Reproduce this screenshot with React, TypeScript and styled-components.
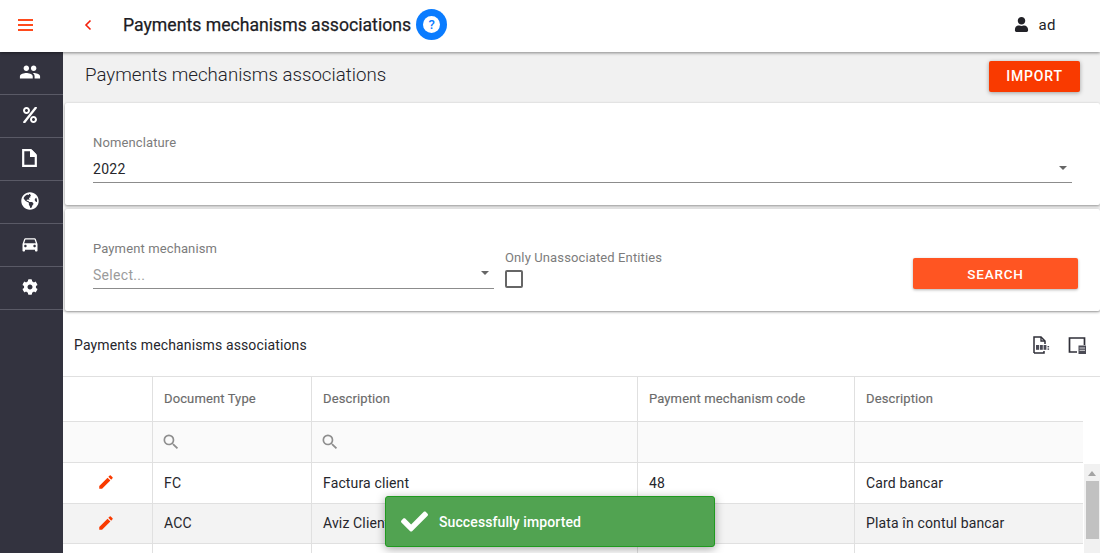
import React from "react";
import styled, { createGlobalStyle } from "styled-components";
import { FaCheck, FaCog, FaGlobeAmericas, FaPercent, FaUser } from "react-icons/fa";
import { MdDirectionsCar, MdEdit, MdPeople, MdSearch } from "react-icons/md";

const GlobalStyle = createGlobalStyle`
  html, body {
    margin: 0;
    padding: 0;
    height: 100%;
    overflow: hidden;
    background: #ffffff;
    font-family: Roboto, "Liberation Sans", sans-serif;
  }
  * { box-sizing: border-box; }
`;

const Page = styled.div`
  position: relative;
  width: 1100px;
  height: 553px;
  overflow: hidden;
  display: flex;
  flex-direction: column;
`;

const TopBar = styled.header`
  position: relative;
  z-index: 2;
  flex: 0 0 52px;
  height: 52px;
  display: flex;
  align-items: center;
  padding-bottom: 3px;
  background: #ffffff;
  box-shadow: 0 1px 3px rgba(0, 0, 0, 0.45);
`;

const MenuLines = styled.div`
  width: 15px;
  margin-left: 18px;
  display: flex;
  flex-direction: column;
  gap: 3px;
  span {
    display: block;
    height: 2px;
    background: #ff4a1c;
  }
`;

const BackIcon = styled.svg`
  width: 8px;
  height: 12px;
  margin-left: 51px;
`;

const AppTitle = styled.h1`
  margin: 0 0 0 31px;
  font-size: 17.65px;
  font-weight: 400;
  -webkit-text-stroke: 0.25px #1c1c24;
  color: #1c1c24;
  white-space: nowrap;
`;

const HelpBadge = styled.div`
  width: 31px;
  height: 31px;
  margin-left: 5px;
  border-radius: 50%;
  background: #0a7cff;
  display: flex;
  align-items: center;
  justify-content: center;
  span {
    width: 17px;
    height: 17px;
    border-radius: 50%;
    background: #ffffff;
    color: #0a7cff;
    font-size: 13px;
    font-weight: 500;
    line-height: 17px;
    text-align: center;
  }
`;

const UserBox = styled.div`
  margin-left: auto;
  margin-right: 44px;
  display: flex;
  align-items: center;
  gap: 9px;
  font-size: 15px;
  letter-spacing: 0.5px;
  color: #222228;
`;

const Body = styled.div`
  flex: 1;
  min-height: 0;
  display: flex;
`;

const SideBar = styled.nav`
  flex: 0 0 63px;
  background: #33333f;
`;

const SideItem = styled.div`
  height: 43px;
  display: flex;
  align-items: center;
  justify-content: center;
  padding: 0 4px 2px 0;
  color: #ffffff;
  font-size: 18px;
  border-bottom: 1px solid #5a5a66;
`;

const Main = styled.main`
  flex: 1;
  min-width: 0;
  display: flex;
  flex-direction: column;
  background: #f1f1f1;
`;

const PageHead = styled.div`
  flex: 0 0 51px;
  display: flex;
  align-items: center;
  justify-content: space-between;
  padding: 0 20px 3px 22px;
`;

const PageTitle = styled.h2`
  margin: 0 0 2px;
  font-size: 18.7px;
  font-weight: 300;
  color: #222228;
`;

const ImportButton = styled.button`
  width: 91px;
  height: 31px;
  border: 0;
  border-radius: 2px;
  background: #f93a00;
  color: #ffffff;
  font: 500 14px Roboto, sans-serif;
  letter-spacing: 0.8px;
  box-shadow: 0 1px 4px rgba(0, 0, 0, 0.35);
`;

const Card = styled.section<{ $gap: number }>`
  position: relative;
  z-index: 1;
  margin: 0 0 ${(p) => p.$gap}px 2px;
  height: 102px;
  background: #ffffff;
  border-radius: 2px;
  box-shadow: 0 1px 3px rgba(0, 0, 0, 0.4);
`;

const NomenclatureCard = styled(Card)`
  padding: 32px 28px 0 28px;
`;

const FieldLabel = styled.label`
  display: block;
  font-size: 13px;
  line-height: 15px;
  letter-spacing: 0.12px;
  color: #7c7c7c;
`;

const SelectLine = styled.div<{ $muted?: boolean }>`
  position: relative;
  height: 28px;
  margin-top: 5px;
  display: flex;
  align-items: center;
  font-size: 14px;
  letter-spacing: 0.3px;
  color: ${(p) => (p.$muted ? "#9b9b9b" : "#26262c")};
  border-bottom: 1px solid #8c8c8c;
  &::after {
    content: "";
    position: absolute;
    right: 5px;
    top: 11px;
    border-left: 4.5px solid transparent;
    border-right: 4.5px solid transparent;
    border-top: 4.5px solid #666666;
  }
`;

const SearchCard = styled(Card)`
  display: flex;
  align-items: flex-start;
  padding: 32px 22px 0 28px;
`;

const PaymentField = styled.div`
  flex: 0 0 401px;
  ${SelectLine} {
    margin-top: 0;
    height: 33px;
    padding-top: 6px;
    &::after {
      top: 15px;
    }
  }
`;

const OnlyField = styled.div`
  margin: 9px 0 0 11px;
  color: #8c8c8c;
`;

const CheckBox = styled.div`
  width: 18px;
  height: 18px;
  margin-top: 5px;
  border: 2px solid #666666;
  border-radius: 2px;
`;

const SearchButton = styled.button`
  margin: 17px 0 0 auto;
  width: 165px;
  height: 31px;
  padding-top: 2px;
  border: 0;
  border-radius: 2px;
  background: #ff5522;
  color: #ffffff;
  font: 500 13.5px Roboto, sans-serif;
  letter-spacing: 0.8px;
  box-shadow: 0 1px 3px rgba(0, 0, 0, 0.3);
`;

const TableArea = styled.section`
  flex: 1;
  min-height: 0;
  margin-top: 1px;
  background: #ffffff;
  position: relative;
`;

const TableBar = styled.div`
  height: 65px;
  display: flex;
  align-items: center;
  padding: 2px 13px 0 11px;
  border-bottom: 1px solid #e0e0e0;
`;

const TableTitle = styled.div`
  flex: 1;
  font-size: 14px;
  letter-spacing: 0.13px;
  color: #26262c;
`;

const ToolIcon = styled.svg`
  width: 20px;
  height: 20px;
  margin-left: 16px;
`;

const GridRow = styled.div<{ $h: number; $tone?: string }>`
  display: grid;
  grid-template-columns: 90px 159px 326px 217px 228px;
  width: 1020px;
  height: ${(p) => p.$h}px;
  background: ${(p) => p.$tone || "#ffffff"};
  border-bottom: 1px solid #e0e0e0;
`;

const GridCell = styled.div`
  display: flex;
  align-items: center;
  padding: 0 0 1px 11px;
  font-size: 14px;
  letter-spacing: 0.14px;
  color: #26262c;
  border-right: 1px solid #e0e0e0;
  white-space: nowrap;
  overflow: hidden;
  &:last-child {
    border-right: 0;
  }
`;

const HeadCell = styled(GridCell)`
  padding-bottom: 2px;
  font-size: 13px;
  font-weight: 400;
  letter-spacing: 0.12px;
  -webkit-text-stroke: 0.15px #6b6b6b;
  color: #6b6b6b;
`;

const EditCell = styled(GridCell)`
  justify-content: center;
  padding: 0 4px 2px 0;
  color: #f93a00;
  font-size: 18px;
`;

const FilterCell = styled(GridCell)`
  padding-left: 8px;
  color: #8e8e8e;
  font-size: 20px;
`;

const ScrollTrack = styled.div`
  position: absolute;
  top: 152px;
  left: 1021px;
  right: 0;
  bottom: 0;
  background: #f1f1f1;
  &::before {
    content: "";
    position: absolute;
    top: 7px;
    left: 4px;
    border-left: 4px solid transparent;
    border-right: 4px solid transparent;
    border-bottom: 5px solid #a3a3a3;
  }
  &::after {
    content: "";
    position: absolute;
    top: 17px;
    left: 2px;
    width: 13px;
    height: 58px;
    background: #c1c1c1;
  }
`;

const Toast = styled.div`
  position: absolute;
  left: 385px;
  top: 496px;
  width: 330px;
  height: 51px;
  display: flex;
  align-items: center;
  gap: 11px;
  padding-left: 15px;
  border: 1px solid #1f9a1f;
  border-radius: 3px;
  background: #51a351;
  color: #ffffff;
  font-size: 14px;
  font-weight: 500;
  letter-spacing: 0.1px;
  box-shadow: 0 2px 10px rgba(0, 0, 0, 0.35);
  z-index: 3;
`;

const FileIcon = () => (
  <svg width="15" height="18" viewBox="0 0 15 18">
    <path d="M1.2 1.2h7.6l5 5v10.6H1.2z" fill="none" stroke="#ffffff" strokeWidth="2.2" />
    <path d="M8 1h2l4 4v3H8z" fill="#ffffff" />
  </svg>
);

const navIcons = [
  <MdPeople key="users" size={22} />,
  <FaPercent key="percent" size={16} />,
  <FileIcon key="file" />,
  <FaGlobeAmericas key="globe" size={18} />,
  <MdDirectionsCar key="car" size={20} />,
  <FaCog key="cog" size={16} />,
];

const columns = ["Document Type", "Description", "Payment mechanism code", "Description"];

const rows = [
  ["FC", "Factura client", "48", "Card bancar"],
  ["ACC", "Aviz Client", "42", "Plata în contul bancar"],
  ["", "", "", ""],
];

const App = () => {
  return (
    <Page>
      <GlobalStyle />
      <TopBar>
        <MenuLines>
          <span />
          <span />
          <span />
        </MenuLines>
        <BackIcon viewBox="0 0 8 12">
          <path d="M6.5 1.5 2 6l4.5 4.5" fill="none" stroke="#f5200c" strokeWidth="1.6" />
        </BackIcon>
        <AppTitle>Payments mechanisms associations</AppTitle>
        <HelpBadge>
          <span>?</span>
        </HelpBadge>
        <UserBox>
          <FaUser size={15} />
          ad
        </UserBox>
      </TopBar>
      <Body>
        <SideBar>
          {navIcons.map((icon, index) => (
            <SideItem key={index}>{icon}</SideItem>
          ))}
        </SideBar>
        <Main>
          <PageHead>
            <PageTitle>Payments mechanisms associations</PageTitle>
            <ImportButton>IMPORT</ImportButton>
          </PageHead>
          <NomenclatureCard $gap={4}>
            <FieldLabel>Nomenclature</FieldLabel>
            <SelectLine>2022</SelectLine>
          </NomenclatureCard>
          <SearchCard $gap={0}>
            <PaymentField>
              <FieldLabel>Payment mechanism</FieldLabel>
              <SelectLine $muted>Select...</SelectLine>
            </PaymentField>
            <OnlyField>
              <FieldLabel as="div">Only Unassociated Entities</FieldLabel>
              <CheckBox />
            </OnlyField>
            <SearchButton>SEARCH</SearchButton>
          </SearchCard>
          <TableArea>
            <TableBar>
              <TableTitle>Payments mechanisms associations</TableTitle>
              <ToolIcon viewBox="0 0 20 20">
                <path d="M3 18V2h7l4 4v3M3 18h10v-2" fill="none" stroke="#2f2f38" strokeWidth="1.5" />
                <path d="M10 2v4h4" fill="none" stroke="#2f2f38" strokeWidth="1.3" />
                <rect x="5" y="10" width="3.2" height="4.8" fill="#4a4a55" />
                <rect x="9" y="10" width="2.8" height="4.8" fill="#4a4a55" />
                <rect x="12.6" y="10" width="2.8" height="4.8" fill="#4a4a55" />
                <rect x="16.5" y="11" width="1.6" height="1.4" fill="#4a4a55" />
                <rect x="16.5" y="13.4" width="1.6" height="1.4" fill="#4a4a55" />
              </ToolIcon>
              <ToolIcon viewBox="0 0 20 20">
                <path d="M10 17H2.5V3h15v7" fill="none" stroke="#2f2f38" strokeWidth="1.7" />
                <rect x="11.5" y="10.5" width="7.5" height="8.5" fill="#4a4a55" />
                <path d="M12.5 13h5.5M12.5 15.3h5.5" stroke="#ffffff" strokeWidth="0.8" />
              </ToolIcon>
            </TableBar>
            <GridRow $h={45}>
              <HeadCell />
              {columns.map((label, index) => (
                <HeadCell key={index}>{label}</HeadCell>
              ))}
            </GridRow>
            <GridRow $h={41} $tone="#fafafa">
              <FilterCell />
              <FilterCell>
                <MdSearch />
              </FilterCell>
              <FilterCell>
                <MdSearch />
              </FilterCell>
              <FilterCell />
              <FilterCell />
            </GridRow>
            {rows.map((row, index) => (
              <GridRow key={index} $h={index === 0 ? 41 : 40} $tone={index === 1 ? "#f3f3f3" : "#ffffff"}>
                <EditCell>{row[0] && <MdEdit />}</EditCell>
                {row.map((value, cellIndex) => (
                  <GridCell key={cellIndex}>{value}</GridCell>
                ))}
              </GridRow>
            ))}
            <ScrollTrack />
          </TableArea>
        </Main>
      </Body>
      <Toast>
        <FaCheck size={27} />
        Successfully imported
      </Toast>
    </Page>
  );
};

export default App;
